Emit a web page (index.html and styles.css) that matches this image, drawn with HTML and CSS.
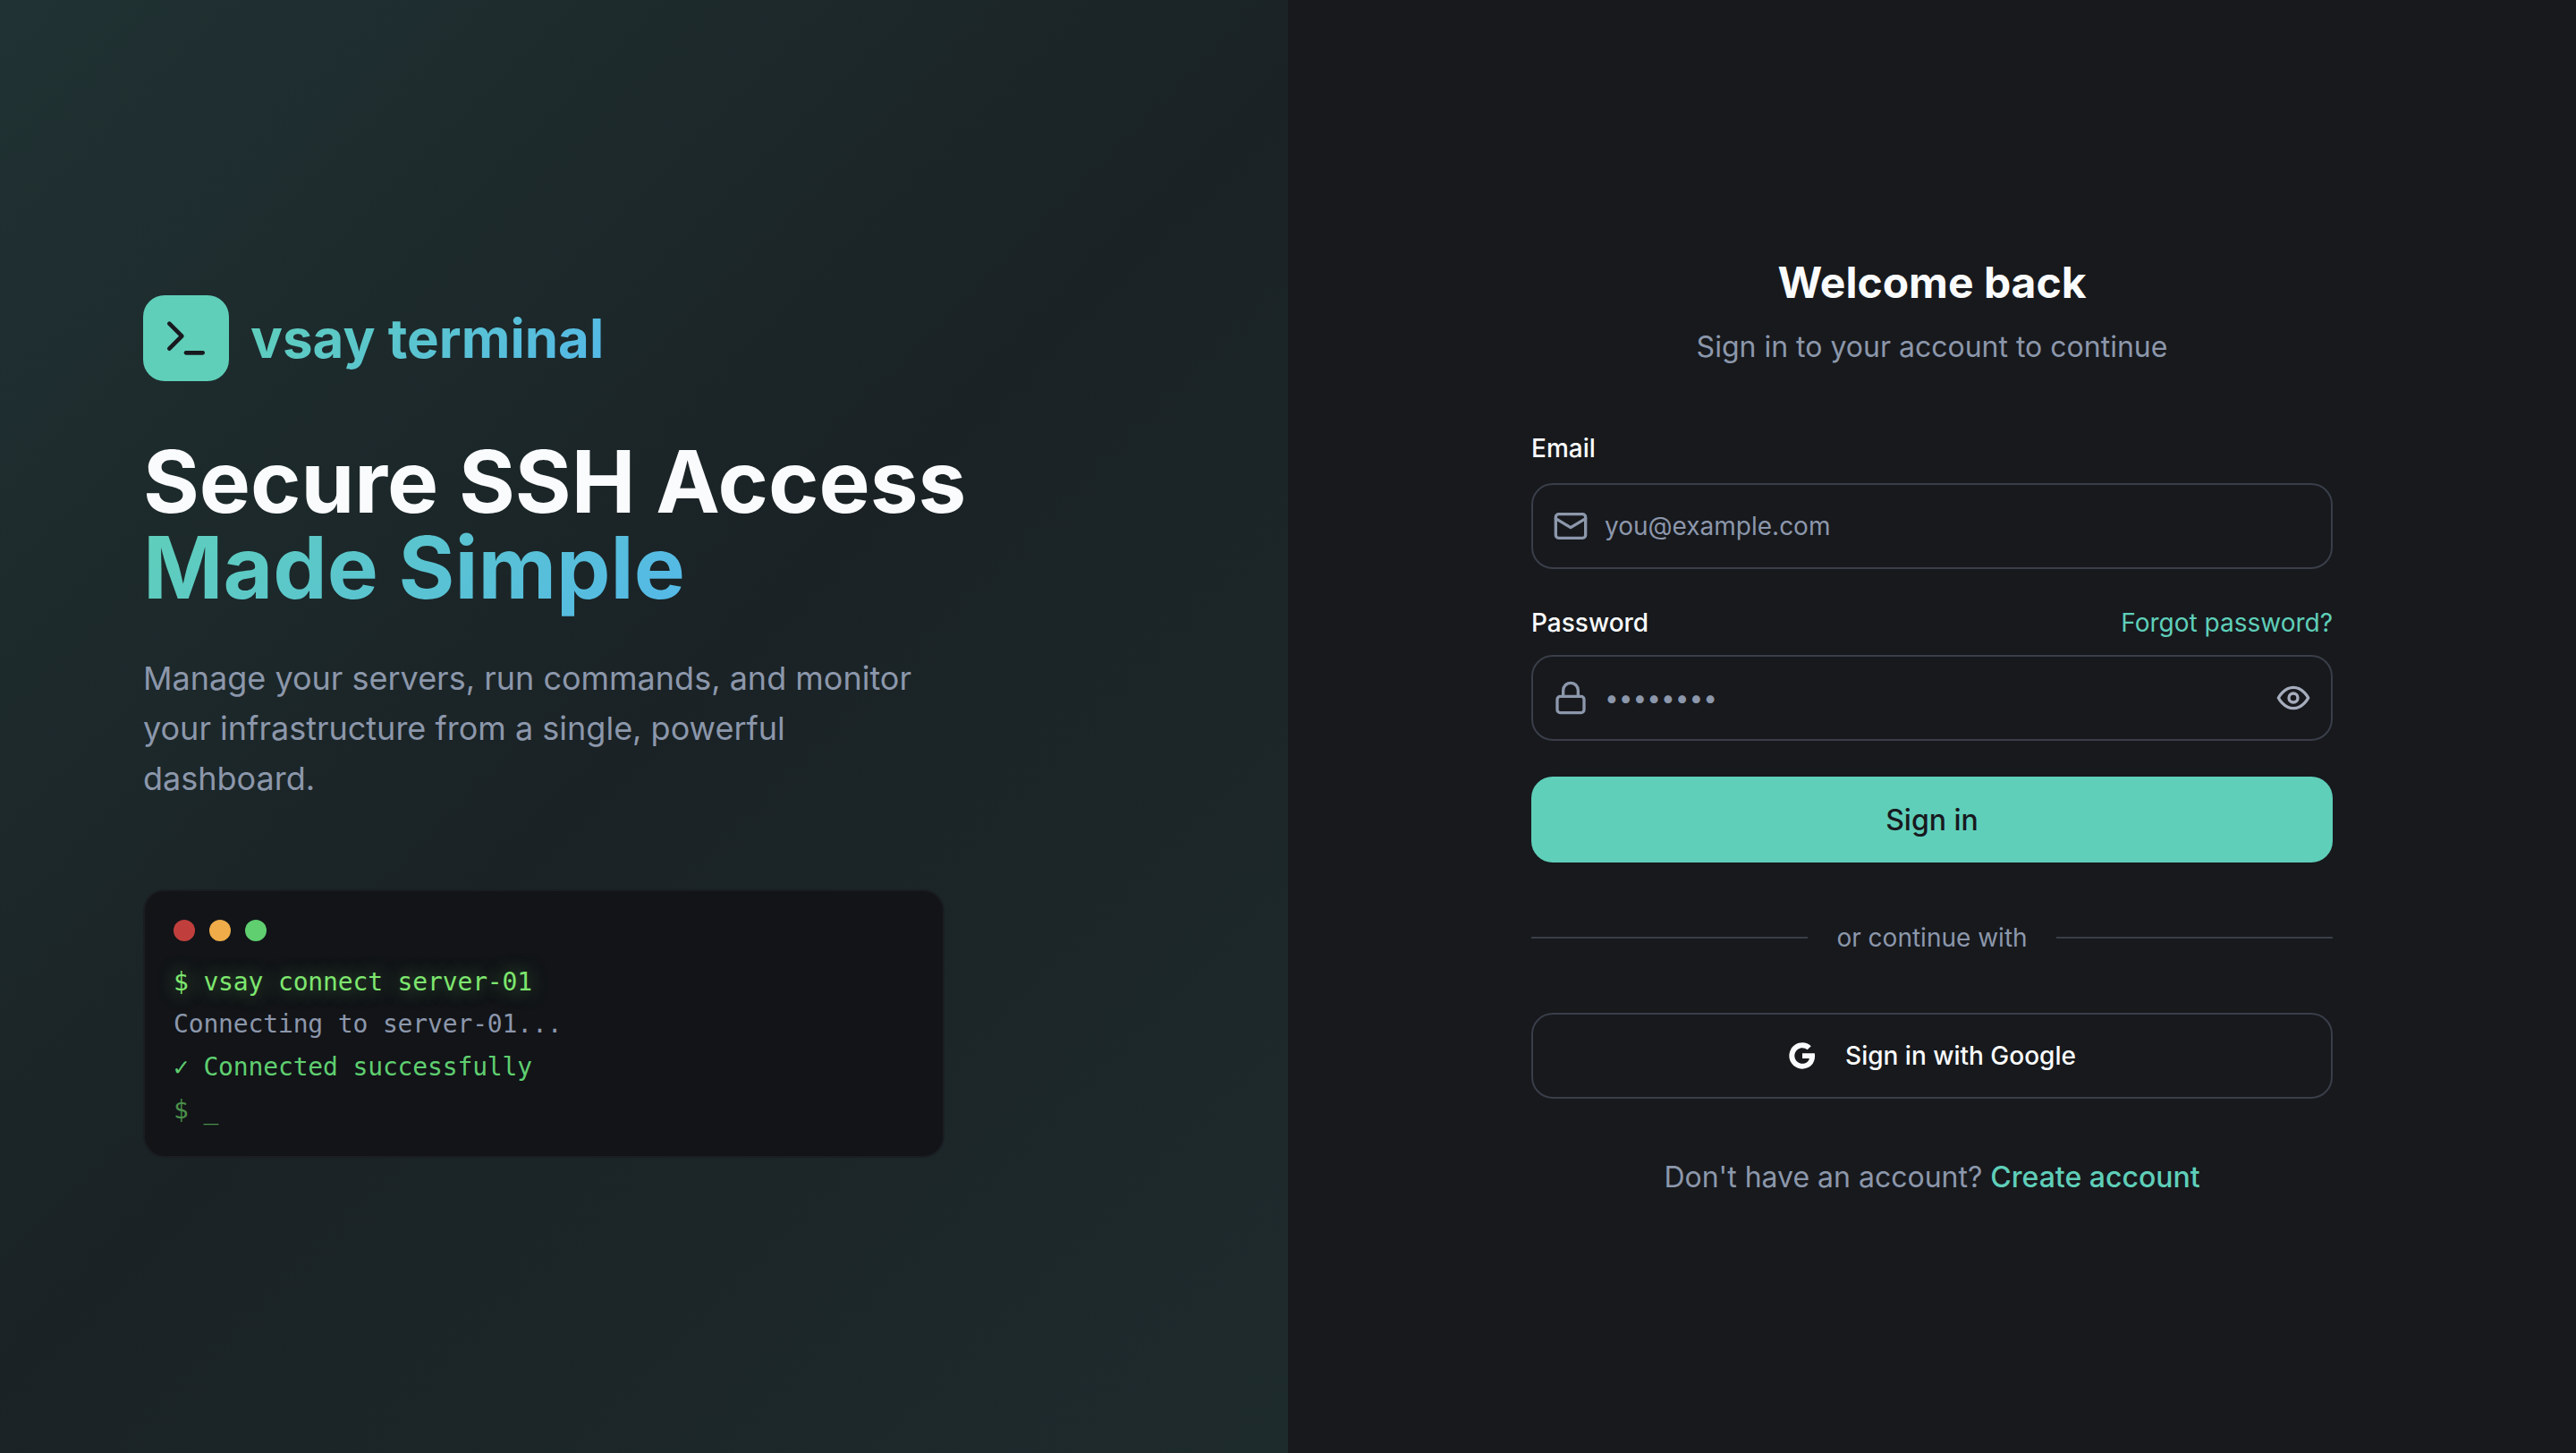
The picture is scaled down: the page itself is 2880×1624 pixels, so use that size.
FILE: index.html
```html
<!DOCTYPE html>
<html lang="en">
<head>
    <meta charset="UTF-8">
    <meta name="viewport" content="width=device-width, initial-scale=1.0">
    <title>vsay terminal - Sign in</title>
    <link rel="stylesheet" href="styles.css">
</head>
<body>
    <div class="page">
        <section class="hero">
            <div class="brand">
                <div class="brand-icon">
                    <svg viewBox="0 0 24 24" width="56" height="56" fill="none" stroke="currentColor" stroke-width="2" stroke-linecap="round" stroke-linejoin="round">
                        <polyline points="4 17 10 11 4 5"/>
                        <line x1="12" y1="19" x2="20" y2="19"/>
                    </svg>
                </div>
                <span class="brand-name gradient-text">vsay terminal</span>
            </div>

            <h1 class="hero-title">Secure SSH Access<br><span class="gradient-text">Made Simple</span></h1>

            <p class="hero-text">Manage your servers, run commands, and monitor your infrastructure from a single, powerful dashboard.</p>

            <div class="terminal">
                <div class="terminal-dots">
                    <span class="dot dot-red"></span>
                    <span class="dot dot-yellow"></span>
                    <span class="dot dot-green"></span>
                </div>
                <div class="line line-cmd">$ vsay connect server-01</div>
                <div class="line line-muted">Connecting to server-01...</div>
                <div class="line line-ok">✓ Connected successfully</div>
                <div class="line line-prompt">$ _</div>
            </div>
        </section>

        <section class="panel">
            <form class="login">
                <h2 class="login-title">Welcome back</h2>
                <p class="login-sub">Sign in to your account to continue</p>

                <div class="field field-email">
                    <label class="label" for="email">Email</label>
                    <div class="input-wrap">
                        <svg class="input-icon" viewBox="0 0 24 24" width="40" height="40" fill="none" stroke="currentColor" stroke-width="2" stroke-linecap="round" stroke-linejoin="round">
                            <rect x="2" y="4" width="20" height="16" rx="2"/>
                            <path d="m22 7-10 6L2 7"/>
                        </svg>
                        <input class="input" id="email" type="email" placeholder="you@example.com">
                    </div>
                </div>

                <div class="field field-password">
                    <div class="label-row">
                        <label class="label" for="password">Password</label>
                        <a class="forgot" href="#">Forgot password?</a>
                    </div>
                    <div class="input-wrap">
                        <svg class="input-icon" viewBox="0 0 24 24" width="40" height="40" fill="none" stroke="currentColor" stroke-width="2" stroke-linecap="round" stroke-linejoin="round">
                            <rect x="3" y="11" width="18" height="11" rx="2"/>
                            <path d="M7 11V7a5 5 0 0 1 10 0v4"/>
                        </svg>
                        <input class="input" id="password" type="password" value="password">
                        <svg class="eye-icon" viewBox="0 0 24 24" width="40" height="40" fill="none" stroke="currentColor" stroke-width="2" stroke-linecap="round" stroke-linejoin="round">
                            <path d="M2 12s3.6-7 10-7 10 7 10 7-3.6 7-10 7-10-7-10-7z"/>
                            <circle cx="12" cy="12" r="3"/>
                        </svg>
                    </div>
                </div>

                <button class="btn-primary" type="button">Sign in</button>

                <div class="divider"><span>or continue with</span></div>

                <button class="btn-google" type="button">
                    <svg viewBox="0 0 24 24" width="32" height="32" fill="currentColor">
                        <path d="M22.56 12.25c0-.78-.07-1.53-.2-2.25H12v4.26h5.92c-.26 1.37-1.04 2.53-2.21 3.31v2.77h3.57c2.08-1.92 3.28-4.74 3.28-8.09z"/>
                        <path d="M12 23c2.97 0 5.46-.98 7.28-2.66l-3.57-2.77c-.98.66-2.23 1.06-3.71 1.06-2.86 0-5.29-1.93-6.16-4.53H2.18v2.84C3.99 20.53 7.7 23 12 23z"/>
                        <path d="M5.84 14.09c-.22-.66-.35-1.36-.35-2.09s.13-1.43.35-2.09V7.07H2.18C1.43 8.55 1 10.22 1 12s.43 3.45 1.18 4.93l3.66-2.84z"/>
                        <path d="M12 5.38c1.62 0 3.06.56 4.21 1.64l3.15-3.15C17.45 2.09 14.97 1 12 1 7.7 1 3.99 3.47 2.18 7.07l3.66 2.84c.87-2.6 3.3-4.53 6.16-4.53z"/>
                    </svg>
                    <span>Sign in with Google</span>
                </button>

                <p class="signup">Don't have an account? <a href="#">Create account</a></p>
            </form>
        </section>
    </div>
</body>
</html>
```

FILE: styles.css
```css
:root {
    --teal: #5fcfb9;
    --blue: #54b8e8;
    --panel-bg: #17191d;
    --border: #3a3e49;
    --muted: #8c97ab;
    --white: #fafbfc;
}

* {
    box-sizing: border-box;
}

body {
    margin: 0;
    background: var(--panel-bg);
    font-family: 'Inter', 'Liberation Sans', sans-serif;
    color: var(--white);
}

.page {
    display: flex;
    height: 1624px;
}

.gradient-text {
    background: linear-gradient(135deg, var(--teal), var(--blue));
    -webkit-background-clip: text;
    background-clip: text;
    color: transparent;
}

/* left side */
.hero {
    width: 1440px;
    padding: 0 160px;
    display: flex;
    flex-direction: column;
    justify-content: center;
    background: linear-gradient(135deg, #203233 0%, #1a2225 50%, #1e2b2d 100%);
}

.brand {
    display: flex;
    align-items: center;
    gap: 24px;
    margin-bottom: 64px;
}

.brand-icon {
    width: 96px;
    height: 96px;
    border-radius: 24px;
    background: var(--teal);
    color: #18191e;
    display: flex;
    align-items: center;
    justify-content: center;
}

.brand-name {
    font-size: 60px;
    font-weight: 700;
}

.hero-title {
    margin: 0 0 48px;
    font-size: 96px;
    line-height: 96px;
    font-weight: 700;
}

.hero-text {
    margin: 0 0 96px;
    width: 896px;
    font-size: 36px;
    line-height: 56px;
    color: var(--muted);
}

.terminal {
    width: 896px;
    padding: 32px 32px 28px;
    border: 2px solid #1a1d22;
    border-radius: 24px;
    background: #121418;
    font-family: 'DejaVu Sans Mono', 'Liberation Mono', monospace;
    font-size: 28px;
    line-height: 1.7;
    letter-spacing: -0.15px;
}

.terminal-dots {
    display: flex;
    gap: 16px;
    margin-bottom: 22px;
}

.dot {
    width: 24px;
    height: 24px;
    border-radius: 50%;
}

.dot-red { background: #c03f3c; }
.dot-yellow { background: #efac48; }
.dot-green { background: #5fcf70; }

.line-cmd {
    color: #7ee76f;
    text-shadow: 0 0 20px rgba(126, 231, 111, .5);
}

.line-muted { color: var(--muted); }
.line-ok { color: #5fcf70; }

.line-prompt {
    color: #4a8f4a;
}

/* right side */
.panel {
    flex: 1;
    display: flex;
    align-items: center;
    justify-content: center;
}

.login {
    width: 896px;
    display: flex;
    flex-direction: column;
}

.login-title {
    margin: 0 0 16px;
    font-size: 48px;
    line-height: 64px;
    font-weight: 700;
    text-align: center;
}

.login-sub {
    margin: 0 0 69px;
    font-size: 32px;
    line-height: 48px;
    color: var(--muted);
    text-align: center;
}

.field {
    margin-bottom: 40px;
}

.label-row {
    display: flex;
    justify-content: space-between;
    align-items: center;
}

.label {
    display: block;
    font-size: 28px;
    line-height: 40px;
    font-weight: 500;
    margin-bottom: 19px;
}

.label-row .label {
    margin-bottom: 16px;
}

.forgot {
    margin-bottom: 16px;
    font-size: 28px;
    line-height: 40px;
    color: var(--teal);
    text-decoration: none;
}

.input-wrap {
    height: 96px;
    padding: 0 22px;
    display: flex;
    align-items: center;
    gap: 18px;
    border: 2px solid var(--border);
    border-radius: 24px;
    color: var(--muted);
}

.input {
    flex: 1;
    min-width: 0;
    padding: 0;
    border: none;
    outline: none;
    background: transparent;
    font-family: inherit;
    font-size: 28px;
    color: var(--muted);
}

.input::placeholder {
    color: var(--muted);
}

.eye-icon {
    color: #a6adbd;
}

.btn-primary {
    height: 96px;
    border: none;
    border-radius: 24px;
    background: var(--teal);
    color: #18191e;
    font-family: inherit;
    font-size: 32px;
    font-weight: 500;
}

.divider {
    margin: 64px 0;
    display: flex;
    align-items: center;
    gap: 32px;
    font-size: 28px;
    line-height: 40px;
    color: var(--muted);
}

.divider::before, .divider::after {
    content: "";
    flex: 1;
    height: 2px;
    background: var(--border);
}

.btn-google {
    height: 96px;
    display: flex;
    align-items: center;
    justify-content: center;
    gap: 32px;
    border: 2px solid var(--border);
    border-radius: 24px;
    background: transparent;
    color: var(--white);
    font-family: inherit;
    font-size: 28px;
    font-weight: 500;
}

.signup {
    margin: 64px 0 0;
    font-size: 32px;
    line-height: 48px;
    color: var(--muted);
    text-align: center;
}

.signup a {
    color: var(--teal);
    font-weight: 500;
    text-decoration: none;
}
```
